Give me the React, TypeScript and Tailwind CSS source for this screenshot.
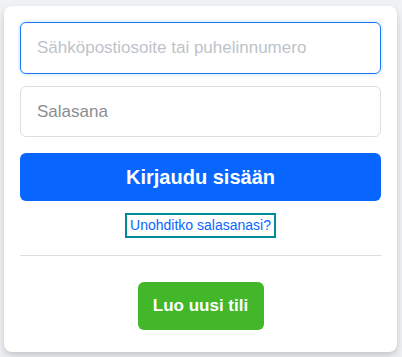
import React from "react";

export default function App() {
  return (
    <div className="w-[402px] h-[357px] bg-[#f0f2f5] pt-[6px] pl-[4px]" style={{ fontFamily: '"Liberation Sans", Arial, sans-serif' }}>
      <div className="w-[393px] h-[346px] bg-white rounded-[8px] shadow-[0_2px_4px_rgba(0,0,0,0.1),0_8px_16px_rgba(0,0,0,0.1)] px-[16px] pt-[16px] flex flex-col">
        <div className="h-[52px] rounded-[6px] border border-[#1877f2] shadow-[0_0_0_2px_#e7f3ff] flex items-center pl-[16px] text-[17px] text-[#bec3c9]">
          Sähköpostiosoite tai puhelinnumero
        </div>
        <div className="mt-[12px] h-[51px] rounded-[6px] border border-[#dddfe2] flex items-center pl-[16px] text-[17px] text-[#8a8d91]">
          Salasana
        </div>
        <button className="mt-[16px] h-[48px] rounded-[6px] bg-[#0866ff] text-white text-[20px] font-bold leading-[48px]">
          Kirjaudu sisään
        </button>
        <div className="mt-[12px] flex justify-center">
          <span className="border-[2px] border-[#008c96] px-[3px] h-[25px] flex items-center text-[14px] text-[#0866ff]">
            Unohditko salasanasi?
          </span>
        </div>
        <div className="mt-[17px] h-px bg-[#dadde1]" />
        <div className="mt-[26px] flex justify-center">
          <button className="w-[126px] h-[48px] rounded-[6px] bg-[#42b72a] text-white text-[17px] font-bold">
            Luo uusi tili
          </button>
        </div>
      </div>
    </div>
  );
}
